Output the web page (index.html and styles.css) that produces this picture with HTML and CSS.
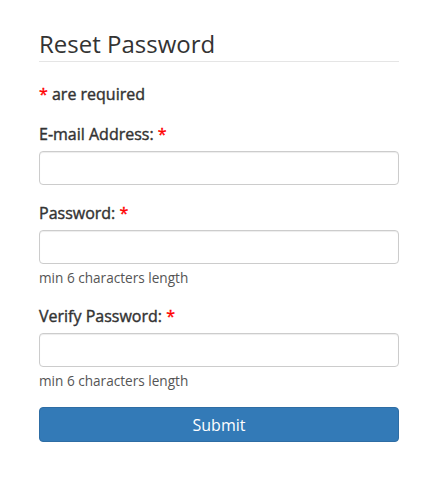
FILE: index.html
```html
<!DOCTYPE html>
<html>
<head>
<meta charset="utf-8">
<link rel="stylesheet" href="styles.css">
</head>
<body>
<div class="page">
  <h2 class="title">Reset Password</h2>
  <p class="required-note"><span class="req">*</span> are required</p>
  <form class="form">
    <div class="group">
      <label class="label">E-mail Address: <span class="req">*</span></label>
      <input class="input" type="text">
    </div>
    <div class="group">
      <label class="label">Password: <span class="req">*</span></label>
      <input class="input" type="password">
      <div class="help">min 6 characters length</div>
    </div>
    <div class="group">
      <label class="label">Verify Password: <span class="req">*</span></label>
      <input class="input" type="password">
      <div class="help">min 6 characters length</div>
    </div>
    <button class="btn" type="button">Submit</button>
  </form>
</div>
</body>
</html>
```
FILE: styles.css
```css
* { box-sizing: border-box; }
html, body { margin: 0; padding: 0; background: #fff; }
body {
  font-family: "Open Sans", "Liberation Sans", sans-serif;
  color: #333;
  font-size: 14px;
}
.page {
  width: 360px;
  margin-left: 39px;
  padding-top: 30px;
}
.title {
  margin: 0;
  font-size: 24px;
  font-weight: 400;
  line-height: 27px;
  padding-bottom: 4px;
  border-bottom: 1px solid #e5e5e5;
}
.required-note {
  margin: 22px 0 0 0;
  font-size: 16px;
  font-weight: 400;
  line-height: 20px;
  -webkit-text-stroke: 0.4px #333;
}
.req { color: #f00; -webkit-text-stroke-color: #f00; }
.form { margin: 0; display: flex; flex-direction: column; }
.group { margin-top: 18px; display: flex; flex-direction: column; }
.group:first-child { margin-top: 20px; }
.label {
  font-size: 16px;
  font-weight: 400;
  line-height: 20px;
  margin-bottom: 7px;
  -webkit-text-stroke: 0.4px #333;
}
.input {
  width: 360px;
  height: 34px;
  border: 1px solid #ccc;
  border-radius: 4px;
  background: #fff;
  margin: 0;
  padding: 6px 12px;
  font-family: inherit;
  box-shadow: inset 0 1px 1px rgba(0,0,0,0.075);
}
.help {
  margin-top: 3px;
  font-size: 13.6px;
  line-height: 21px;
  color: #555;
}
.btn {
  margin-top: 16px;
  width: 360px;
  height: 35px;
  background: #337ab7;
  border: 1px solid #2e6da4;
  border-radius: 4px;
  color: #fff;
  font-family: inherit;
  font-size: 16px;
  padding: 0;
}
```
